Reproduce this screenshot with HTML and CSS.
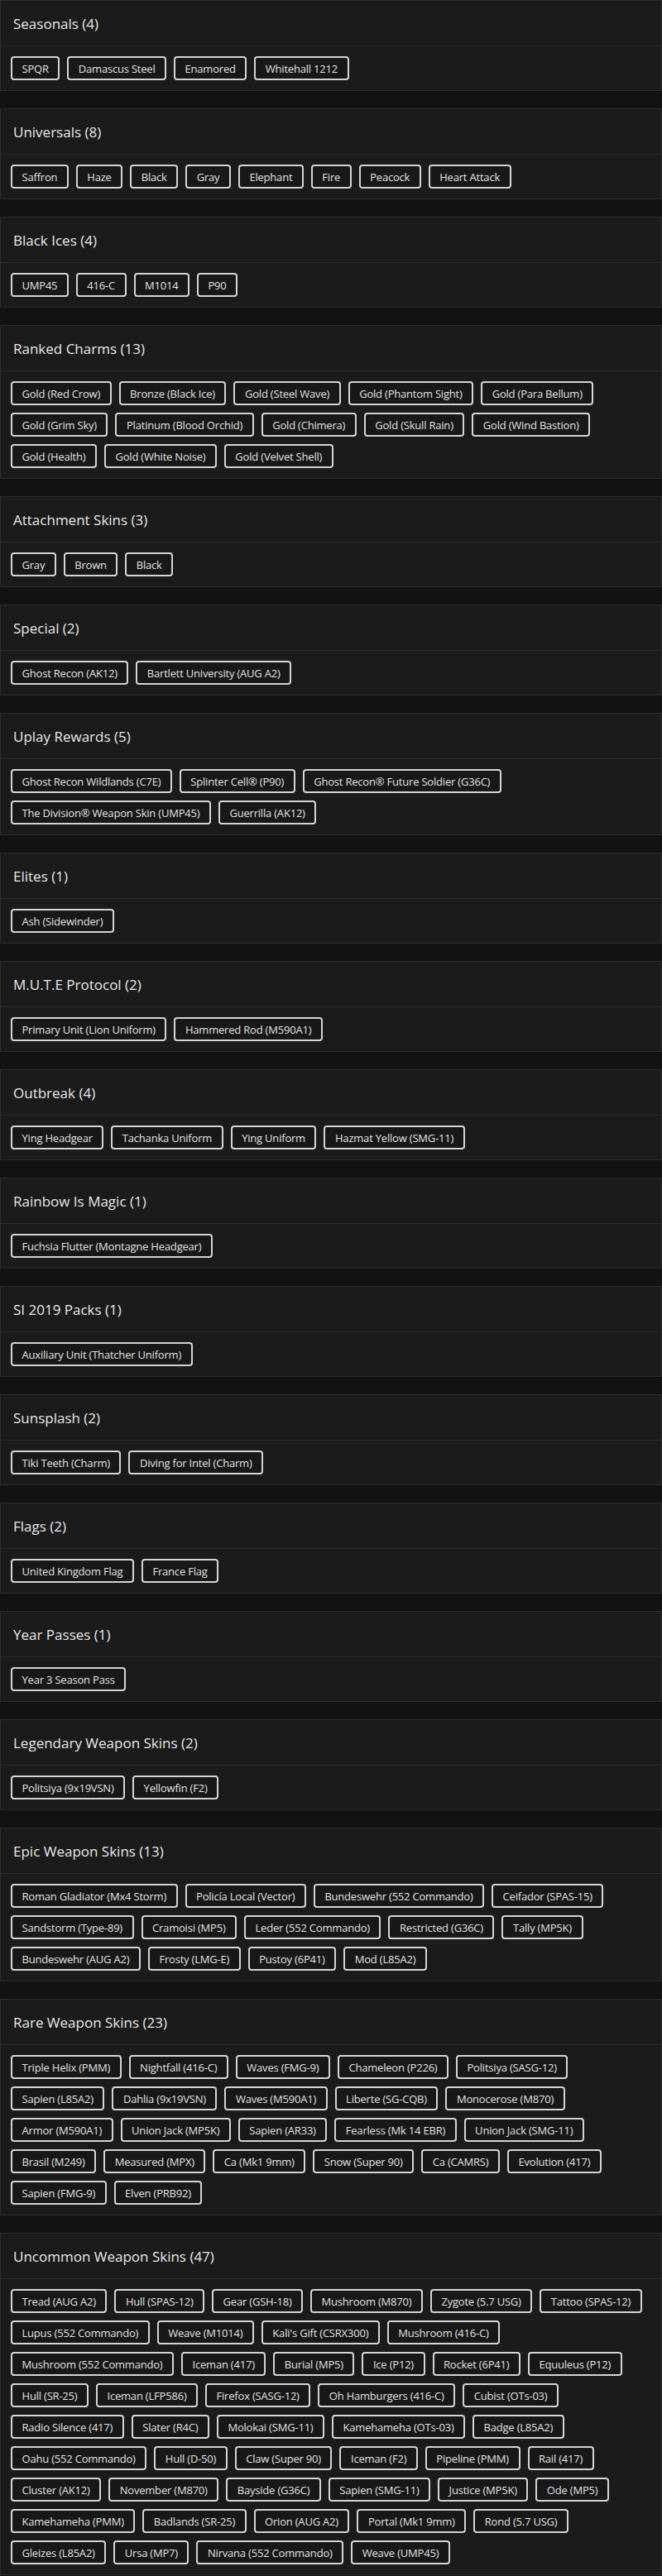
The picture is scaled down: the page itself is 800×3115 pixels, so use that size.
FILE: index.html
```html
<!DOCTYPE html>
<html lang="en">
<head>
<meta charset="utf-8">
<title>Inventory</title>
<link rel="stylesheet" href="styles.css">
</head>
<body>
<main class="list">
  <section class="card">
    <h2 class="card-title">Seasonals (4)</h2>
    <div class="tags"><span class="tag">SPQR</span><span class="tag">Damascus Steel</span><span class="tag">Enamored</span><span class="tag">Whitehall 1212</span></div>
  </section>
  <section class="card">
    <h2 class="card-title">Universals (8)</h2>
    <div class="tags"><span class="tag">Saffron</span><span class="tag">Haze</span><span class="tag">Black</span><span class="tag">Gray</span><span class="tag">Elephant</span><span class="tag">Fire</span><span class="tag">Peacock</span><span class="tag">Heart Attack</span></div>
  </section>
  <section class="card">
    <h2 class="card-title">Black Ices (4)</h2>
    <div class="tags"><span class="tag">UMP45</span><span class="tag">416-C</span><span class="tag">M1014</span><span class="tag">P90</span></div>
  </section>
  <section class="card">
    <h2 class="card-title">Ranked Charms (13)</h2>
    <div class="tags"><span class="tag">Gold (Red Crow)</span><span class="tag">Bronze (Black Ice)</span><span class="tag">Gold (Steel Wave)</span><span class="tag">Gold (Phantom Sight)</span><span class="tag">Gold (Para Bellum)</span><span class="tag">Gold (Grim Sky)</span><span class="tag">Platinum (Blood Orchid)</span><span class="tag">Gold (Chimera)</span><span class="tag">Gold (Skull Rain)</span><span class="tag">Gold (Wind Bastion)</span><span class="tag">Gold (Health)</span><span class="tag">Gold (White Noise)</span><span class="tag">Gold (Velvet Shell)</span></div>
  </section>
  <section class="card">
    <h2 class="card-title">Attachment Skins (3)</h2>
    <div class="tags"><span class="tag">Gray</span><span class="tag">Brown</span><span class="tag">Black</span></div>
  </section>
  <section class="card">
    <h2 class="card-title">Special (2)</h2>
    <div class="tags"><span class="tag">Ghost Recon (AK12)</span><span class="tag">Bartlett University (AUG A2)</span></div>
  </section>
  <section class="card">
    <h2 class="card-title">Uplay Rewards (5)</h2>
    <div class="tags"><span class="tag">Ghost Recon Wildlands (C7E)</span><span class="tag">Splinter Cell® (P90)</span><span class="tag">Ghost Recon® Future Soldier (G36C)</span><span class="tag">The Division® Weapon Skin (UMP45)</span><span class="tag">Guerrilla (AK12)</span></div>
  </section>
  <section class="card">
    <h2 class="card-title">Elites (1)</h2>
    <div class="tags"><span class="tag">Ash (Sidewinder)</span></div>
  </section>
  <section class="card">
    <h2 class="card-title">M.U.T.E Protocol (2)</h2>
    <div class="tags"><span class="tag">Primary Unit (Lion Uniform)</span><span class="tag">Hammered Rod (M590A1)</span></div>
  </section>
  <section class="card">
    <h2 class="card-title">Outbreak (4)</h2>
    <div class="tags"><span class="tag">Ying Headgear</span><span class="tag">Tachanka Uniform</span><span class="tag">Ying Uniform</span><span class="tag">Hazmat Yellow (SMG-11)</span></div>
  </section>
  <section class="card">
    <h2 class="card-title">Rainbow Is Magic (1)</h2>
    <div class="tags"><span class="tag">Fuchsia Flutter (Montagne Headgear)</span></div>
  </section>
  <section class="card">
    <h2 class="card-title">SI 2019 Packs (1)</h2>
    <div class="tags"><span class="tag">Auxiliary Unit (Thatcher Uniform)</span></div>
  </section>
  <section class="card">
    <h2 class="card-title">Sunsplash (2)</h2>
    <div class="tags"><span class="tag">Tiki Teeth (Charm)</span><span class="tag">Diving for Intel (Charm)</span></div>
  </section>
  <section class="card">
    <h2 class="card-title">Flags (2)</h2>
    <div class="tags"><span class="tag">United Kingdom Flag</span><span class="tag">France Flag</span></div>
  </section>
  <section class="card">
    <h2 class="card-title">Year Passes (1)</h2>
    <div class="tags"><span class="tag">Year 3 Season Pass</span></div>
  </section>
  <section class="card">
    <h2 class="card-title">Legendary Weapon Skins (2)</h2>
    <div class="tags"><span class="tag">Politsiya (9x19VSN)</span><span class="tag">Yellowfin (F2)</span></div>
  </section>
  <section class="card">
    <h2 class="card-title">Epic Weapon Skins (13)</h2>
    <div class="tags"><span class="tag">Roman Gladiator (Mx4 Storm)</span><span class="tag">Policía Local (Vector)</span><span class="tag">Bundeswehr (552 Commando)</span><span class="tag">Ceifador (SPAS-15)</span><span class="tag">Sandstorm (Type-89)</span><span class="tag">Cramoisi (MP5)</span><span class="tag">Leder (552 Commando)</span><span class="tag">Restricted (G36C)</span><span class="tag">Tally (MP5K)</span><span class="tag">Bundeswehr (AUG A2)</span><span class="tag">Frosty (LMG-E)</span><span class="tag">Pustoy (6P41)</span><span class="tag">Mod (L85A2)</span></div>
  </section>
  <section class="card">
    <h2 class="card-title">Rare Weapon Skins (23)</h2>
    <div class="tags"><span class="tag">Triple Helix (PMM)</span><span class="tag">Nightfall (416-C)</span><span class="tag">Waves (FMG-9)</span><span class="tag">Chameleon (P226)</span><span class="tag">Politsiya (SASG-12)</span><span class="tag">Sapien (L85A2)</span><span class="tag">Dahlia (9x19VSN)</span><span class="tag">Waves (M590A1)</span><span class="tag">Liberte (SG-CQB)</span><span class="tag">Monocerose (M870)</span><span class="tag">Armor (M590A1)</span><span class="tag">Union Jack (MP5K)</span><span class="tag">Sapien (AR33)</span><span class="tag">Fearless (Mk 14 EBR)</span><span class="tag">Union Jack (SMG-11)</span><span class="tag">Brasil (M249)</span><span class="tag">Measured (MPX)</span><span class="tag">Ca (Mk1 9mm)</span><span class="tag">Snow (Super 90)</span><span class="tag">Ca (CAMRS)</span><span class="tag">Evolution (417)</span><span class="tag">Sapien (FMG-9)</span><span class="tag">Elven (PRB92)</span></div>
  </section>
  <section class="card">
    <h2 class="card-title">Uncommon Weapon Skins (47)</h2>
    <div class="tags"><span class="tag">Tread (AUG A2)</span><span class="tag">Hull (SPAS-12)</span><span class="tag">Gear (GSH-18)</span><span class="tag">Mushroom (M870)</span><span class="tag">Zygote (5.7 USG)</span><span class="tag">Tattoo (SPAS-12)</span><span class="tag">Lupus (552 Commando)</span><span class="tag">Weave (M1014)</span><span class="tag">Kali's Gift (CSRX300)</span><span class="tag">Mushroom (416-C)</span><span class="tag">Mushroom (552 Commando)</span><span class="tag">Iceman (417)</span><span class="tag">Burial (MP5)</span><span class="tag">Ice (P12)</span><span class="tag">Rocket (6P41)</span><span class="tag">Equuleus (P12)</span><span class="tag">Hull (SR-25)</span><span class="tag">Iceman (LFP586)</span><span class="tag">Firefox (SASG-12)</span><span class="tag">Oh Hamburgers (416-C)</span><span class="tag">Cubist (OTs-03)</span><span class="tag">Radio Silence (417)</span><span class="tag">Slater (R4C)</span><span class="tag">Molokai (SMG-11)</span><span class="tag">Kamehameha (OTs-03)</span><span class="tag">Badge (L85A2)</span><span class="tag">Oahu (552 Commando)</span><span class="tag">Hull (D-50)</span><span class="tag">Claw (Super 90)</span><span class="tag">Iceman (F2)</span><span class="tag">Pipeline (PMM)</span><span class="tag">Rail (417)</span><span class="tag">Cluster (AK12)</span><span class="tag">November (M870)</span><span class="tag">Bayside (G36C)</span><span class="tag">Sapien (SMG-11)</span><span class="tag">Justice (MP5K)</span><span class="tag">Ode (MP5)</span><span class="tag">Kamehameha (PMM)</span><span class="tag">Badlands (SR-25)</span><span class="tag">Orion (AUG A2)</span><span class="tag">Portal (Mk1 9mm)</span><span class="tag">Rond (5.7 USG)</span><span class="tag">Gleizes (L85A2)</span><span class="tag">Ursa (MP7)</span><span class="tag">Nirvana (552 Commando)</span><span class="tag">Weave (UMP45)</span></div>
  </section>
</main>
</body>
</html>
```

FILE: styles.css
```css
* {
  box-sizing: border-box;
}

html, body {
  margin: 0;
  padding: 0;
  background: #121212;
}

body {
  font-family: "Open Sans", "Liberation Sans", sans-serif;
  color: #e4e4e4;
}

.list {
  display: flex;
  flex-direction: column;
  gap: 21px;
}

.card {
  background: #1b1b1b;
  border: 1px solid #2b2b2b;
}

.card-title {
  margin: 0;
  height: 55px;
  display: flex;
  align-items: center;
  padding: 0 15px;
  border-bottom: 1px solid #2b2b2b;
  font-size: 17px;
  font-weight: 500;
  color: #e8e8e8;
}

.tags {
  display: flex;
  flex-wrap: wrap;
  gap: 9px;
  padding: 12px 12px;
}

.tag {
  display: inline-flex;
  align-items: center;
  height: 29px;
  padding: 0 11.5px;
  border: 2px solid #d4d4d4;
  border-radius: 4px;
  background: #181818;
  font-size: 13px;
  letter-spacing: -0.2px;
  color: #e2e2e2;
  white-space: nowrap;
}
```
